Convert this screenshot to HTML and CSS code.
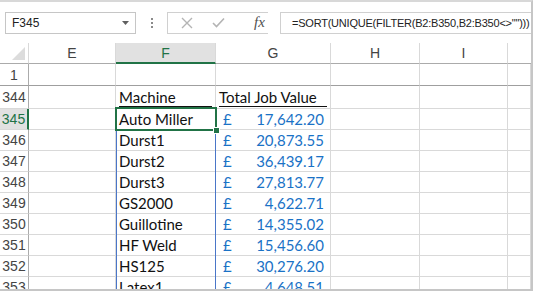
FILE: index.html
```html
<!DOCTYPE html>
<html>
<head>
<meta charset="utf-8" />
<title>SORT UNIQUE FILTER</title>
<link rel="stylesheet" href="styles.css">
</head>
<body>
<div class="window">
	<div class="fbar">
		<div class="namebox">
			<span>F345</span>
			<svg class="drop" width="7" height="4" viewBox="0 0 7 4"><path d="M0 0H7L3.5 4Z" fill="#606060"/></svg>
		</div>
		<div class="dots"><i></i><i></i><i></i></div>
		<div class="btns">
			<svg width="12" height="12" viewBox="0 0 12 12"><path d="M1 1L11 11M11 1L1 11" stroke="#b4b4b4" stroke-width="1.4" fill="none"/></svg>
			<svg width="13" height="11" viewBox="0 0 13 11"><path d="M1 6L4.5 9.5L12 1.5" stroke="#b4b4b4" stroke-width="1.6" fill="none"/></svg>
			<span class="fx">fx</span>
		</div>
		<div class="formula">=SORT(UNIQUE(FILTER(B2:B350,B2:B350&lt;&gt;"")))</div>
	</div>

	<div class="sheet">
		<div class="grid">
			<div class="corner"><svg width="13" height="13" viewBox="0 0 13 13"><path d="M13 0V13H0Z" fill="#dcdcdc"/></svg></div>
			<div class="colh">E</div>
			<div class="colh sel">F</div>
			<div class="colh">G</div>
			<div class="colh">H</div>
			<div class="colh">I</div>
			<div class="colh last"></div>

			<div class="rowh hid">1</div>
			<div class="c hid"></div><div class="c hid"></div><div class="c hid"></div><div class="c hid"></div><div class="c hid"></div><div class="c hid"></div>

			<div class="rowh">344</div>
			<div class="c"></div>
			<div class="c"><span class="acc">Machine</span></div>
			<div class="c"><span class="acc">Total Job Value</span></div>
			<div class="c"></div><div class="c"></div><div class="c"></div>

			<div class="rowh sel">345</div>
			<div class="c"></div>
			<div class="c name">Auto Miller</div>
			<div class="c money"><span>£</span><span>17,642.20</span></div>
			<div class="c"></div><div class="c"></div><div class="c"></div>

			<div class="rowh">346</div>
			<div class="c"></div>
			<div class="c name">Durst1</div>
			<div class="c money"><span>£</span><span>20,873.55</span></div>
			<div class="c"></div><div class="c"></div><div class="c"></div>

			<div class="rowh">347</div>
			<div class="c"></div>
			<div class="c name">Durst2</div>
			<div class="c money"><span>£</span><span>36,439.17</span></div>
			<div class="c"></div><div class="c"></div><div class="c"></div>

			<div class="rowh">348</div>
			<div class="c"></div>
			<div class="c name">Durst3</div>
			<div class="c money"><span>£</span><span>27,813.77</span></div>
			<div class="c"></div><div class="c"></div><div class="c"></div>

			<div class="rowh">349</div>
			<div class="c"></div>
			<div class="c name">GS2000</div>
			<div class="c money"><span>£</span><span>4,622.71</span></div>
			<div class="c"></div><div class="c"></div><div class="c"></div>

			<div class="rowh">350</div>
			<div class="c"></div>
			<div class="c name">Guillotine</div>
			<div class="c money"><span>£</span><span>14,355.02</span></div>
			<div class="c"></div><div class="c"></div><div class="c"></div>

			<div class="rowh">351</div>
			<div class="c"></div>
			<div class="c name">HF Weld</div>
			<div class="c money"><span>£</span><span>15,456.60</span></div>
			<div class="c"></div><div class="c"></div><div class="c"></div>

			<div class="rowh">352</div>
			<div class="c"></div>
			<div class="c name">HS125</div>
			<div class="c money"><span>£</span><span>30,276.20</span></div>
			<div class="c"></div><div class="c"></div><div class="c"></div>

			<div class="rowh">353</div>
			<div class="c"></div>
			<div class="c name">Latex1</div>
			<div class="c money"><span>£</span><span>4,648.51</span></div>
			<div class="c"></div><div class="c"></div><div class="c"></div>
		</div>
		<div class="spill"></div>
		<div class="cursor"><i class="handle"></i></div>
	</div>
</div>
</body>
</html>
```

FILE: styles.css
```css
html,body{margin:0;padding:0;background:#fff;}
.window{
	width:533px;height:291px;box-sizing:border-box;
	border-top:2px solid #d8d8d8;border-right:2px solid #c6c6c6;border-bottom:2px solid #c6c6c6;
	overflow:hidden;background:#fff;
	font-family:"Liberation Sans",Arial,sans-serif;
}
.fbar{display:flex;align-items:center;height:41px;padding-left:5px;}
.namebox{
	width:131px;height:22px;box-sizing:border-box;border:1px solid #c6c6c6;
	display:flex;align-items:center;justify-content:space-between;
	padding:0 6px 0 6px;font-size:12px;color:#222;
}
.dots{display:flex;flex-direction:column;gap:2px;margin-left:15px;}
.dots i{width:2px;height:2px;background:#8a8a8a;display:block;}
.btns{
	margin-left:14px;width:101px;height:22px;box-sizing:border-box;
	border:1px solid #d0d0d0;border-right:none;
	display:flex;align-items:center;padding-left:13px;gap:19px;
}
.fx{font-family:"Liberation Serif",serif;font-style:italic;font-size:15px;color:#505050;margin-left:10px;}
.formula{
	margin-left:12px;flex:1;height:22px;box-sizing:border-box;
	border:1px solid #d0d0d0;border-right:none;
	font-size:11px;letter-spacing:-0.22px;color:#222;padding-left:11px;line-height:20px;white-space:nowrap;overflow:hidden;
}
.sheet{position:relative;}
.grid{
	display:grid;
	grid-template-columns:29px 87px 100px 115px 89px 88px 1fr;
	grid-template-rows:21px 22px 23px repeat(9,21px);
}
.grid > div{box-sizing:border-box;border-right:1px solid #d9d9d9;border-bottom:1px solid #d9d9d9;}
.corner{display:flex;align-items:flex-end;justify-content:flex-end;padding:0 3px 3px 0;border-bottom-color:#ababab !important;border-right-color:#d9d9d9;}
.colh{
	display:flex;align-items:center;justify-content:center;
	font-size:14px;color:#444;border-bottom-color:#ababab !important;
}
.colh.sel{background:#e1e1e1;color:#217346;border-bottom:2px solid #217346 !important;}
.colh.last{border-right:none !important;}
.rowh{
	display:flex;align-items:center;justify-content:center;
	font-size:14px;color:#444;border-right-color:#ababab !important;
}
.rowh.sel{background:#e1e1e1;color:#217346;border-right:2px solid #217346 !important;}
.hid{border-bottom-color:#9f9f9f !important;}
.c{font-family:Lato,"Liberation Sans",sans-serif;font-size:15px;color:#111;display:flex;align-items:flex-end;padding:0 3px 1px 3px;white-space:nowrap;}
.acc{display:block;width:100%;border-bottom:1px solid #111;line-height:18px;}
.money{justify-content:space-between;color:#1a72c6;padding:0 6px 1px 7px;}
.spill{position:absolute;left:116px;top:65px;width:100px;height:300px;box-sizing:border-box;border-left:1px solid #4a76c8;border-right:1px solid #4a76c8;}
.cursor{position:absolute;left:115px;top:64px;width:102px;height:24px;box-sizing:border-box;border:2px solid #217346;}
.handle{position:absolute;right:-5px;bottom:-5px;width:5px;height:5px;background:#217346;border:1px solid #fff;display:block;}
```
